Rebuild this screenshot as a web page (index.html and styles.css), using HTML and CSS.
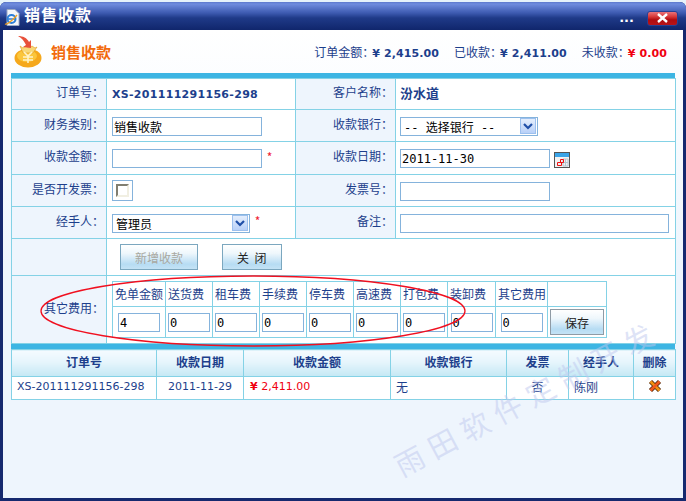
FILE: index.html
```html
<!DOCTYPE html>
<html lang="zh">
<head>
<meta charset="utf-8">
<title>销售收款</title>
<link rel="stylesheet" href="styles.css">
</head>
<body>
<div class="window">
  <div class="titlebar">
    <svg class="ie-icon" width="17" height="17" viewBox="0 0 17 17">
      <path d="M3 0.5h8l4 4v12H3z" fill="#f4f6fa" stroke="#9aa8c4"/>
      <circle cx="7.5" cy="10" r="4" fill="none" stroke="#2c7fd8" stroke-width="2"/>
      <path d="M4 10h7" stroke="#2c7fd8" stroke-width="1.5"/>
      <path d="M1 15c2 1 8-4 12-9" fill="none" stroke="#f0a020" stroke-width="1.3"/>
    </svg>
    <span class="title-text">销售收款</span>
    <span class="title-dots">...</span>
    <span class="close-btn">
      <svg width="13" height="10" viewBox="0 0 13 10"><path d="M2 1l9 8M11 1L2 9" stroke="#fff" stroke-width="2.4"/></svg>
    </span>
  </div>
  <div class="content">
    <div class="head">
      <svg class="bag-icon" width="30" height="34" viewBox="0 0 30 34">
        <ellipse cx="14" cy="23" rx="13.5" ry="9.5" fill="#f5a81c"/>
        <ellipse cx="13" cy="21" rx="10" ry="6" fill="#fbc63c"/>
        <path d="M6 11l3 2 3-2 3 2 3-2 3 2 2-1-4 6H9z" fill="#f8d878" stroke="#e09a18" stroke-width=".6"/>
        <path d="M4 1c5 0 9 2 11 6l2-2v8l-8-1 3-2C10 6 8 3 4 1z" fill="#e8503a"/>
        <path d="M10 17l4 4 4-4M9 22h10M9 25h10M14 21v7" fill="none" stroke="#fff3c8" stroke-width="1.6"/>
      </svg>
      <span class="head-title">销售收款</span>
      <div class="summary">
        <span class="sum-item">订单金额：<b class="num">¥ 2,415.00</b></span>
        <span class="sum-item">已收款：<b class="num">¥ 2,411.00</b></span>
        <span class="sum-item">未收款：<b class="num red">¥ 0.00</b></span>
      </div>
    </div>

    <div class="bar"></div>
    <table class="form">
      <colgroup><col class="c1"><col class="c2"><col class="c3"><col class="c4"></colgroup>
      <tr class="r31">
        <th>订单号：</th><td><b class="order-no">XS-201111291156-298</b></td>
        <th>客户名称：</th><td><b class="cust">汾水道</b></td>
      </tr>
      <tr class="r32">
        <th>财务类别：</th><td><input class="inp w150" type="text" value="销售收款"></td>
        <th>收款银行：</th>
        <td>
          <div class="sel w138"><span class="sel-text">-- 选择银行 --</span>
            <span class="sel-btn"><svg width="10" height="7" viewBox="0 0 10 7"><path d="M1 1l4 4 4-4" fill="none" stroke="#1f4fa8" stroke-width="2.2"/></svg></span>
          </div>
        </td>
      </tr>
      <tr class="r33">
        <th>收款金额：</th><td><input class="inp w150" type="text"> <span class="req">*</span></td>
        <th>收款日期：</th>
        <td class="date-cell">
          <input class="inp w150" type="text" value="2011-11-30">
          <svg class="cal-icon" width="16" height="16" viewBox="0 0 16 16">
            <rect x=".5" y=".5" width="15" height="15" fill="#f2f2f2" stroke="#555"/>
            <rect x="1" y="1" width="14" height="4" fill="#3aa4e8"/>
            <path d="M9 7h5v7H9zM9 10.500h5M11.500 7v7" fill="none" stroke="#b4c4d0"/>
            <path d="M3.500 10.500h4v3h-4zM6.500 7.500h3v3h-3z" fill="none" stroke="#f01010"/>
          </svg>
        </td>
      </tr>
      <tr class="r32">
        <th>是否开发票：</th>
        <td><span class="check-wrap"><input class="check" type="checkbox" aria-label="是否开发票"></span></td>
        <th>发票号：</th><td><input class="inp w150" type="text"></td>
      </tr>
      <tr class="r32">
        <th>经手人：</th>
        <td class="handler">
          <div class="sel w138"><span class="sel-text">管理员</span>
            <span class="sel-btn"><svg width="10" height="7" viewBox="0 0 10 7"><path d="M1 1l4 4 4-4" fill="none" stroke="#1f4fa8" stroke-width="2.2"/></svg></span>
          </div>
          <span class="req">*</span>
        </td>
        <th>备注：</th><td><input class="inp w269" type="text"></td>
      </tr>
      <tr class="r37">
        <th></th>
        <td colspan="3" class="btn-cell">
          <button class="btn btn-add" type="button" disabled>新增收款</button>
          <button class="btn btn-close" type="button">关&nbsp;&nbsp;闭</button>
        </td>
      </tr>
      <tr class="r68">
        <th>其它费用：</th>
        <td colspan="3" class="fee-cell">
          <table class="fees">
            <colgroup>
              <col class="f53"><col class="f47"><col class="f47"><col class="f47"><col class="f47">
              <col class="f47"><col class="f47"><col class="f48"><col class="f52"><col class="f59">
            </colgroup>
            <tr class="fee-head">
              <td>免单金额</td><td>送货费</td><td>租车费</td><td>手续费</td><td>停车费</td>
              <td>高速费</td><td>打包费</td><td>装卸费</td><td>其它费用</td><td></td>
            </tr>
            <tr class="fee-vals">
              <td><input class="inp w42" type="text" value="4"></td>
              <td><input class="inp w42" type="text" value="0"></td>
              <td><input class="inp w42" type="text" value="0"></td>
              <td><input class="inp w42" type="text" value="0"></td>
              <td><input class="inp w42" type="text" value="0"></td>
              <td><input class="inp w42" type="text" value="0"></td>
              <td><input class="inp w42" type="text" value="0"></td>
              <td><input class="inp w42" type="text" value="0"></td>
              <td><input class="inp w42" type="text" value="0"></td>
              <td><button class="btn btn-save" type="button">保存</button></td>
            </tr>
          </table>
        </td>
      </tr>
    </table>

    <div class="bar"></div>
    <table class="list">
      <colgroup>
        <col class="l145"><col class="l87"><col class="l147"><col class="l116"><col class="l62"><col class="l65"><col class="l42">
      </colgroup>
      <tr class="list-head">
        <th>订单号</th><th>收款日期</th><th>收款金额</th><th>收款银行</th><th>发票</th><th>经手人</th><th>删除</th>
      </tr>
      <tr class="list-row">
        <td class="latin pad5">XS-201111291156-298</td>
        <td class="latin center">2011-11-29</td>
        <td class="latin amount"><b>¥</b> 2,411.00</td>
        <td class="pad5">无</td>
        <td class="center">否</td>
        <td class="pad5">陈刚</td>
        <td class="center">
          <svg class="del-icon" width="14" height="14" viewBox="0 0 14 14">
            <path d="M2.500 2.500l9 9M11.500 2.500l-9 9" stroke="#4a2408" stroke-width="4.400"/>
            <path d="M2.500 2.500l9 9" stroke="#f09010" stroke-width="2.800"/>
            <path d="M11.500 2.500l-9 9" stroke="#f0581c" stroke-width="2.800"/>
          </svg>
        </td>
      </tr>
    </table>
  </div>

  <div class="watermark">雨田软件定制开发</div>
  <svg class="ellipse" width="430" height="75" viewBox="0 0 430 75">
    <ellipse cx="214" cy="37" rx="212" ry="35" fill="none" stroke="#f01020" stroke-width="1.300"/>
  </svg>
</div>
</body>
</html>
```
FILE: styles.css
```css
* { box-sizing: border-box; }
html { background: #e6f2fa; }
body {
  margin: 0;
  padding-top: 2px;
  font-family: "Noto Sans CJK SC", "DejaVu Sans", sans-serif;
  font-size: 12px;
  color: #1d3f8c;
  overflow: hidden;
}
.window {
  position: relative;
  width: 686px;
  height: 499px;
  display: flex;
  flex-direction: column;
  padding: 0 3px 3px;
  background: #16296f;
  border-radius: 6px 6px 0 0;
  overflow: hidden;
}
.titlebar {
  height: 28px;
  margin: 0 -3px;
  padding: 0 8px 0 4px;
  display: flex;
  align-items: center;
  flex: none;
  background: linear-gradient(#5c78cc 0, #6f8cde 2px, #3d5ab0 11px, #1f3a88 16px, #10266c 28px);
}
.ie-icon { flex: none; margin-top: 2px; }
.title-text {
  margin-left: 3px;
  margin-top: -4px;
  color: #fff;
  font-size: 16px;
  font-weight: 700;
  letter-spacing: 1px;
  line-height: 28px;
}
.title-dots {
  margin-left: auto;
  margin-top: 3px;
  margin-right: -1px;
  color: #fff;
  font: 700 13px "DejaVu Sans", sans-serif;
}
.close-btn {
  margin-left: 14px;
  margin-top: 4px;
  width: 31px;
  height: 15px;
  display: flex;
  align-items: center;
  justify-content: center;
  border-radius: 3px;
  border: 1px solid #2a3f92;
  background: linear-gradient(#e8737a 0, #d83a3a 35%, #b00c10 60%, #b81418 100%);
}
.content {
  flex: 1;
  padding: 0 8px;
  background: linear-gradient(#fff 0, #eef5fd 50%);
}
.head {
  height: 43px;
  display: flex;
  align-items: center;
  padding-left: 3px;
}
.bag-icon { flex: none; }
.head-title {
  margin-left: 7px;
  color: #f26a0c;
  font-size: 15px;
  font-weight: 700;
}
.summary {
  margin-left: auto;
  margin-right: 8px;
  display: flex;
  gap: 15px;
}
.sum-item { white-space: nowrap; line-height: 18px; }
.num { font: 700 11px "DejaVu Sans", sans-serif; color: #1d3f8c; margin-left: -2px; letter-spacing: .1px; }
.red { color: #f00010; }
.bar { height: 5px; background: #3db5e3; }

table { border-collapse: collapse; table-layout: fixed; border-spacing: 0; }
.form, .list { width: 664px; }
.form > tbody > tr > td, .form > tbody > tr > th,
.list > tbody > tr > td, .list > tbody > tr > th {
  border: 1px solid #84d2e6;
  padding: 0 0 0 5px;
}
.form > tbody > tr > th {
  background: #eef5fd;
  text-align: right;
  font-weight: 400;
  padding: 0 2px 5px 0;
}
.form > tbody > tr > td { background: #fff; }
.form > tbody > tr > td:nth-child(4) { padding-left: 4px; }
.form > tbody > .r31 > td { padding-bottom: 3px; }
.c1 { width: 95px; }
.c2 { width: 189px; }
.c3 { width: 100px; }
.c4 { width: 280px; }
.r31 { height: 31px; }
.r32 { height: 32px; }
.r33 { height: 33px; }
.r37 { height: 37px; }
.r68 { height: 68px; }

.order-no { font: 700 11px "DejaVu Sans", sans-serif; letter-spacing: .3px; }
.cust { font-weight: 700; font-size: 13px; }

.inp {
  height: 19px;
  padding: 0 1px;
  border: 1px solid #85b3dc;
  background: #fff;
  color: #000;
  font: 12px "DejaVu Sans Mono", "Noto Sans CJK SC", monospace;
  vertical-align: middle;
  outline: 0;
}
.w150 { width: 150px; }
.w269 { width: 269px; }
.w42 { width: 42px; }
.req { color: #f02030; font-size: 12px; margin-left: 2px; }

.sel {
  height: 19px;
  display: inline-flex;
  align-items: center;
  justify-content: space-between;
  border: 1px solid #85b3dc;
  background: #fff;
  vertical-align: middle;
  padding-left: 3px;
}
.w138 { width: 138px; }
.sel-text { color: #000; font: 12px "DejaVu Sans Mono", "Noto Sans CJK SC", monospace; white-space: pre; }
.sel-btn {
  width: 16px;
  height: 16px;
  margin-right: 1px;
  display: flex;
  align-items: center;
  justify-content: center;
  border: 1px solid #9cc0ee;
  background: linear-gradient(#e4eefc, #b8d0f8);
}
.handler .req { margin-left: 2px; }
.date-cell { white-space: nowrap; }
.cal-icon { vertical-align: -6px; margin-left: 1px; }

.check-wrap {
  width: 21px;
  height: 21px;
  display: flex;
  align-items: center;
  justify-content: center;
  border: 1px solid #85b3dc;
}
.check {
  appearance: none;
  margin: 0;
  width: 13px;
  height: 13px;
  border: 2px solid;
  border-color: #807e70 #f1efe2 #f1efe2 #807e70;
  background: #fff;
}

.btn {
  font-family: "Noto Sans CJK SC", sans-serif;
  font-size: 12px;
  color: #222;
  padding: 0;
  height: 26px;
  border: 1px solid #7ba7bf;
  background: linear-gradient(#fff 0, #eef7fc 35%, #b6dcf3 80%, #c4e3f5 100%);
}
.form > tbody > tr > .btn-cell { padding-left: 13px; }
.btn-add { width: 78px; color: #a8a8a0; }
.btn-close { width: 60px; margin-left: 21px; }
.btn-save { width: 54px; height: 26px; border: 1px solid #8f9ba5; }

.form > tbody > tr > .fee-cell { padding-left: 5px; }
.fees { width: 494px; }
.fees td { border: 1px solid #84d2e6; padding: 0; text-align: center; background: #fff; white-space: nowrap; }
.fees .fee-head td { text-align: left; padding: 0 0 2px 2px; }
.fee-head { height: 25px; }
.fee-vals { height: 31px; }
.f53 { width: 53px; }
.f47 { width: 47px; }
.f48 { width: 48px; }
.f52 { width: 52px; }
.f59 { width: 59px; }

.l145 { width: 145px; }
.l87 { width: 87px; }
.l147 { width: 147px; }
.l116 { width: 116px; }
.l62 { width: 62px; }
.l65 { width: 65px; }
.l42 { width: 42px; }
.list-head { height: 27px; }
.list > tbody > .list-head > th {
  padding: 0 0 3px;
  font-size: 12px;
  font-weight: 700;
  text-align: center;
  background: linear-gradient(#f5fbff 0, #e6f5fc 45%, #c4e8f4 100%);
}
.list-row { height: 23px; }
.list > tbody > .list-row > td { background: #fff; padding-bottom: 4px; }
.list > tbody > .list-row > td.center { text-align: center; padding: 0 0 4px; }
.latin { font: 11px "DejaVu Sans", sans-serif; }
.list > tbody > .list-row > .amount { color: #f00010; padding-left: 6px; }
.del-icon { display: block; margin: 0 auto; }

.watermark {
  position: absolute;
  left: 396px;
  top: 444px;
  color: rgba(190, 200, 238, .5);
  font-size: 29px;
  line-height: 40px;
  letter-spacing: 8px;
  white-space: nowrap;
  transform: rotate(-28deg);
  transform-origin: 0 50%;
  pointer-events: none;
}
.ellipse {
  position: absolute;
  left: 39px;
  top: 272px;
  pointer-events: none;
}
```
